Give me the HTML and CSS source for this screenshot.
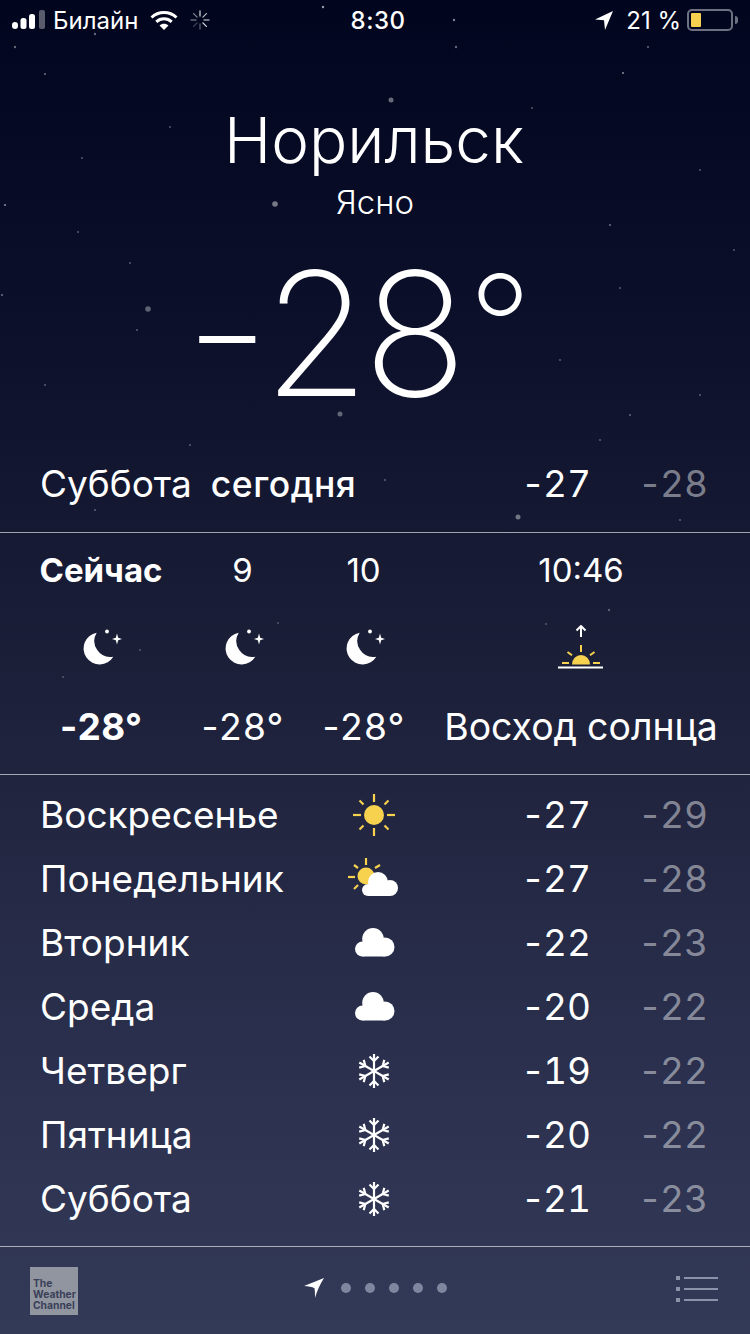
FILE: index.html
```html
<!DOCTYPE html>
<html lang="ru">
<head>
<meta charset="utf-8">
<title>Погода</title>
<link rel="stylesheet" href="styles.css">
</head>
<body>
<div class="screen">
  <svg class="stars" width="750" height="1334" viewBox="0 0 750 1334">
    <g fill="#fff">
      <circle cx="391" cy="100" r="2.500" opacity=".4"/><circle cx="275" cy="204" r="2.800" opacity=".45"/><circle cx="148" cy="309" r="2.800" opacity=".35"/><circle cx="340" cy="414" r="2.500" opacity=".35"/><circle cx="518" cy="517" r="2.500" opacity=".4"/><circle cx="323" cy="7" r="1.200" opacity=".6"/><circle cx="95" cy="34" r="1.200" opacity=".4"/><circle cx="15" cy="47" r="1.200" opacity=".4"/><circle cx="456" cy="47" r="1.200" opacity=".4"/><circle cx="454" cy="20" r="1.200" opacity=".5"/><circle cx="648" cy="47" r="1.200" opacity=".3"/><circle cx="45" cy="74" r="1.100" opacity=".4"/><circle cx="623" cy="73" r="1.100" opacity=".5"/><circle cx="532" cy="108" r="1.100" opacity=".3"/><circle cx="170" cy="127" r="1.100" opacity=".3"/><circle cx="5" cy="205" r="1.100" opacity=".5"/><circle cx="82" cy="158" r="1.100" opacity=".3"/><circle cx="700" cy="170" r="1.100" opacity=".3"/><circle cx="610" cy="225" r="1.100" opacity=".4"/><circle cx="78" cy="232" r="1.100" opacity=".3"/><circle cx="130" cy="263" r="1.100" opacity=".3"/><circle cx="2" cy="295" r="1.100" opacity=".4"/><circle cx="620" cy="288" r="1.100" opacity=".3"/><circle cx="734" cy="250" r="1.100" opacity=".3"/><circle cx="137" cy="330" r="1.100" opacity=".3"/><circle cx="560" cy="360" r="1.100" opacity=".3"/><circle cx="45" cy="385" r="1.100" opacity=".3"/><circle cx="700" cy="395" r="1.100" opacity=".3"/><circle cx="630" cy="415" r="1.100" opacity=".35"/><circle cx="600" cy="440" r="1.100" opacity=".3"/><circle cx="190" cy="445" r="1.100" opacity=".3"/><circle cx="385" cy="480" r="1.100" opacity=".3"/><circle cx="95" cy="510" r="1.100" opacity=".3"/><circle cx="680" cy="520" r="1.100" opacity=".3"/><circle cx="140" cy="650" r="1.100" opacity=".25"/><circle cx="278" cy="623" r="1.100" opacity=".25"/><circle cx="63" cy="677" r="1.100" opacity=".25"/><circle cx="546" cy="624" r="1.100" opacity=".25"/><circle cx="609" cy="610" r="1.200" opacity=".3"/>
    </g>
  </svg>

  <div class="status">
    <div class="status-left">
      <svg class="signal" width="34" height="20" viewBox="0 0 34 20"><g fill="#fff"><rect x="0" y="12" width="6" height="7" rx="3"/><rect x="8.500" y="8" width="6" height="11" rx="2.500"/><rect x="17" y="4" width="6" height="15" rx="2.500"/></g><rect x="27" y="0" width="6" height="19" rx="2" fill="#fff" opacity=".35"/></svg>
      <span class="carrier">Билайн</span>
      <svg class="wifi" width="28" height="20" viewBox="0 0 28 20"><g fill="none" stroke="#fff" stroke-width="3"><path d="M1.500 7.500C8.500 .8 19.500 .8 26.500 7.500"/><path d="M6.300 11.800C10.600 7.800 17.400 7.800 21.700 11.800"/></g><path d="M9.500 15.500C12 13 16 13 18.500 15.500L14 20Z" fill="#fff"/></svg>
      <svg class="spinner" width="20" height="20" viewBox="0 0 20 20" stroke="#fff" stroke-width="1.300" stroke-linecap="round"><path d="M10 1v5" opacity=".8"/><path d="M16.400 3.600l-3.500 3.500" opacity=".7"/><path d="M19 10h-5" opacity=".6"/><path d="M16.400 16.400l-3.500-3.500" opacity=".85"/><path d="M10 19v-5" opacity=".35"/><path d="M3.600 16.400l3.500-3.500" opacity=".25"/><path d="M1 10h5" opacity=".4"/><path d="M3.600 3.600l3.500 3.500" opacity=".5"/></svg>
    </div>
    <div class="clock">8:30</div>
    <div class="status-right">
      <svg class="loc" width="18" height="19" viewBox="0 0 18 19"><path d="M18 0 0 8.500l9 .8L10 19Z" fill="#fff"/></svg>
      <span class="percent">21 %</span>
      <div class="battery"><div class="battery-fill"></div></div>
      <div class="battery-tip"></div>
    </div>
  </div>

  <header class="hero">
    <h1 class="city">Норильск</h1>
    <div class="condition">Ясно</div>
    <div class="temp"><span class="temp-minus">–</span><span class="temp-digits">28</span><span class="temp-deg">°</span></div>
  </header>

  <section class="today">
    <div class="day-name"><span>Суббота</span><span class="today-tag">сегодня</span></div>
    <div class="hi"><span class="sign">-</span>27</div>
    <div class="lo"><span class="sign">-</span>28</div>
  </section>

  <section class="hourly">
    <div class="hour">
      <div class="hour-label strong">Сейчас</div>
      <svg class="moon" width="42" height="36" viewBox="0 0 42 36"><use href="#moon-shape"/></svg>
      <div class="hour-temp strong"><span class="sign">-</span>28°</div>
    </div>
    <div class="hour">
      <div class="hour-label">9</div>
      <svg class="moon" width="42" height="36" viewBox="0 0 42 36"><use href="#moon-shape"/></svg>
      <div class="hour-temp"><span class="sign">-</span>28°</div>
    </div>
    <div class="hour">
      <div class="hour-label">10</div>
      <svg class="moon" width="42" height="36" viewBox="0 0 42 36"><use href="#moon-shape"/></svg>
      <div class="hour-temp"><span class="sign">-</span>28°</div>
    </div>
    <div class="hour hour-wide">
      <div class="hour-label">10:46</div>
      <svg class="sunrise" width="48" height="46" viewBox="0 0 48 46">
        <g fill="none" stroke="#fff" stroke-width="2"><path d="M24 12V1"/><path d="M19.500 5.500 24 1l4.500 4.500"/></g>
        <path d="M1 42.500h45" stroke="#fff" stroke-width="2"/>
        <path d="M15 39.500a9 9.500 0 0 1 18 0Z" fill="#f7d24e"/>
        <g stroke="#f7d24e" stroke-width="2"><path d="M24 20v7"/><path d="M10.500 27l4.500 3.200"/><path d="M37.500 27 33 30.200"/><path d="M5 38h7"/><path d="M36 38h7"/></g>
      </svg>
      <div class="hour-temp">Восход солнца</div>
    </div>
  </section>

  <section class="daily">
    <div class="day"><div class="day-name">Воскресенье</div><svg class="w" width="44" height="44" viewBox="0 0 44 44"><use href="#sun-shape"/></svg><div class="hi"><span class="sign">-</span>27</div><div class="lo"><span class="sign">-</span>29</div></div>
    <div class="day"><div class="day-name">Понедельник</div><svg class="w" width="52" height="44" viewBox="0 0 52 44"><use href="#partly-shape"/></svg><div class="hi"><span class="sign">-</span>27</div><div class="lo"><span class="sign">-</span>28</div></div>
    <div class="day"><div class="day-name">Вторник</div><svg class="w" width="42" height="34" viewBox="0 0 42 34"><use href="#cloud-shape"/></svg><div class="hi"><span class="sign">-</span>22</div><div class="lo"><span class="sign">-</span>23</div></div>
    <div class="day"><div class="day-name">Среда</div><svg class="w" width="42" height="34" viewBox="0 0 42 34"><use href="#cloud-shape"/></svg><div class="hi"><span class="sign">-</span>20</div><div class="lo"><span class="sign">-</span>22</div></div>
    <div class="day"><div class="day-name">Четверг</div><svg class="w" width="36" height="38" viewBox="0 0 36 38"><use href="#snow-shape"/></svg><div class="hi"><span class="sign">-</span>19</div><div class="lo"><span class="sign">-</span>22</div></div>
    <div class="day"><div class="day-name">Пятница</div><svg class="w" width="36" height="38" viewBox="0 0 36 38"><use href="#snow-shape"/></svg><div class="hi"><span class="sign">-</span>20</div><div class="lo"><span class="sign">-</span>22</div></div>
    <div class="day"><div class="day-name">Суббота</div><svg class="w" width="36" height="38" viewBox="0 0 36 38"><use href="#snow-shape"/></svg><div class="hi"><span class="sign">-</span>21</div><div class="lo"><span class="sign">-</span>23</div></div>
    <div class="day"><div class="day-name"></div><svg class="w" width="36" height="38" viewBox="0 0 36 38"><use href="#snow-shape"/></svg><div class="hi"></div><div class="lo"></div></div>
  </section>

  <footer class="footer">
    <div class="twc">The<br>Weather<br>Channel</div>
    <div class="pager">
      <svg class="pager-loc" width="20" height="20" viewBox="0 0 20 20"><path d="M20 0 0 8c4.500 .2 8 .8 10.500 2.200C11 13 11 16 11 20 13 13 16 6 20 0Z" fill="#fff"/></svg>
      <i class="dot"></i><i class="dot"></i><i class="dot"></i><i class="dot"></i><i class="dot"></i>
    </div>
    <svg class="list" width="43" height="26" viewBox="0 0 43 26" fill="#8b93ab"><rect y="0" width="4" height="4"/><rect x="8" y="1" width="34" height="2"/><rect y="11" width="4" height="4"/><rect x="8" y="12" width="34" height="2"/><rect y="22" width="4" height="4"/><rect x="8" y="23" width="34" height="2"/></svg>
  </footer>

  <svg class="defs" width="0" height="0">
    <defs>
      <g id="moon-shape" fill="#fff">
        <path d="M16.700 3.700A16 16 0 1 0 33.300 27.700 16 16 0 0 1 16.700 3.700Z"/>
        <circle cx="27" cy="2.500" r="1.900"/>
        <path d="M37 4.500l1.200 4.300 3.800 1.200-3.800 1.200L37 15.500l-1.200-4.300-3.800-1.200 3.800-1.200Z"/>
      </g>
      <g id="sun-shape">
        <circle cx="22" cy="22" r="10" fill="#f7d24e"/>
        <g stroke="#f7d24e" stroke-width="2.200"><path d="M22 1v8"/><path d="M22 35v8"/><path d="M1 22h8"/><path d="M35 22h8"/><path d="M7.500 7.500l4 4"/><path d="M36.500 7.500l-4 4"/><path d="M7.500 36.500l4-4"/><path d="M36.500 36.500l-4-4"/></g>
      </g>
      <g id="partly-shape">
        <circle cx="18" cy="19" r="8.500" fill="#f7d24e"/>
        <g stroke="#f7d24e" stroke-width="2.200"><path d="M18 1v7"/><path d="M0 20h7"/><path d="M6 8l4 3"/><path d="M32 8l-5 3"/><path d="M6 32l4-4"/></g>
        <g fill="#fff"><circle cx="20" cy="33" r="6"/><circle cx="30" cy="25" r="10"/><circle cx="42" cy="31" r="8"/><rect x="20" y="29" width="22" height="10"/></g>
      </g>
      <g id="cloud-shape" fill="#fff">
        <circle cx="9.500" cy="23" r="7.500"/><circle cx="20" cy="12.800" r="10.800"/><circle cx="32" cy="21" r="9.500"/><rect x="9.500" y="20" width="22.500" height="10.500"/>
      </g>
      <g id="snow-arm" fill="none" stroke="#fff" stroke-width="2.200">
        <path d="M18 19V2"/><path d="M13.500 4.500 18 9l4.500-4.500"/>
      </g>
      <g id="snow-shape">
        <use href="#snow-arm"/>
        <use href="#snow-arm" transform="rotate(60 18 19)"/>
        <use href="#snow-arm" transform="rotate(120 18 19)"/>
        <use href="#snow-arm" transform="rotate(180 18 19)"/>
        <use href="#snow-arm" transform="rotate(240 18 19)"/>
        <use href="#snow-arm" transform="rotate(300 18 19)"/>
      </g>
    </defs>
  </svg>
</div>
</body>
</html>
```

FILE: styles.css
```css
* { box-sizing: border-box; margin: 0; padding: 0; }
html, body { width: 750px; height: 1334px; overflow: hidden; }
body { font-family: Inter, "Noto Sans", "Liberation Sans", sans-serif; color: #fff; }

.screen {
  position: relative;
  width: 750px;
  height: 1334px;
  overflow: hidden;
  display: flex;
  flex-direction: column;
  background: linear-gradient(180deg, #01051e 0%, #0c102a 25%, #1c1f38 50%, #272c49 72%, #333a58 100%);
}
.stars { position: absolute; left: 0; top: 0; filter: blur(.6px); }
.defs { position: absolute; }

.status {
  position: relative;
  height: 40px;
  flex: none;
  display: grid;
  grid-template-columns: 1fr auto 1fr;
  align-items: center;
  font-size: 24px;
  padding: 0 12px;
}
.status-left { display: flex; align-items: center; }
.carrier { margin-left: 7px; }
.wifi { margin-left: 12px; }
.spinner { margin-left: 12px; }
.clock { font-weight: 500; letter-spacing: .5px; margin-left: 5px; margin-right: -1px; }
.status-right { display: flex; align-items: center; justify-content: flex-end; }
.percent { margin-left: 13px; }
.battery { margin-left: 6px; width: 46px; height: 22px; border: 2px solid #6e7182; border-radius: 5px; padding: 2px; }
.battery-fill { width: 10px; height: 100%; background: #f7d24e; border-radius: 1px; }
.battery-tip { width: 3px; height: 8px; margin-left: 2px; background: #6e7182; border-radius: 0 3px 3px 0; }

.hero { position: relative; height: 421px; flex: none; display: flex; flex-direction: column; align-items: center; }
.city { font-size: 63.700px; font-weight: 300; line-height: 82px; margin-top: 59px; margin-left: -2px; }
.condition { font-size: 33px; font-weight: 300; line-height: 40px; margin-top: 1px; }
.temp { font-size: 172px; font-weight: 200; line-height: 190px; margin-top: 16px; white-space: nowrap; margin-left: -19px; }
.temp-digits { letter-spacing: -6px; }
.temp-minus { font-size: 112px; font-weight: 300; line-height: 0; vertical-align: 22px; margin-right: 8px; }
.temp-deg { font-size: 140px; line-height: 0; vertical-align: 20px; margin-left: 7px; }

.today, .day {
  position: relative;
  display: grid;
  grid-template-columns: 293px 82px 1fr 119px;
  align-items: center;
  padding: 0 42px 0 40px;
  font-size: 37px;
  font-weight: 400;
}
.today { height: 72px; padding-bottom: 24px; border-bottom: 1px solid rgba(255,255,255,.6); grid-template-columns: 1fr 119px 119px; }
.today-tag { margin-left: 19px; font-size: 35.500px; font-weight: 500; letter-spacing: .5px; }
.hi, .lo { text-align: right; font-variant-numeric: tabular-nums; padding-bottom: 2px; }
.day-name { padding-bottom: 2px; }
.hi { margin-right: -2px; }
.lo { color: rgba(255,255,255,.45); }
.sign { font-variant-numeric: normal; letter-spacing: 1.500px; }

.hourly {
  position: relative;
  height: 242px;
  flex: none;
  display: flex;
  gap: 40px;
  padding-left: 40px;
  border-bottom: 1px solid rgba(255,255,255,.6);
}
.hour { width: 81px; flex: none; display: flex; flex-direction: column; align-items: center; }
.hour:first-child { width: 122px; }
.hour-wide { width: 272px; margin-left: 1px; }
.hour-label { font-size: 33px; line-height: 36px; margin-top: 19px; white-space: nowrap; }
.hour-temp { font-size: 37px; line-height: 44px; white-space: nowrap; margin-top: auto; margin-bottom: 25px; font-variant-numeric: tabular-nums; }
.hour-temp .sign { letter-spacing: 0; }
.hour-wide .hour-temp { font-size: 37.400px; }
.strong { font-weight: 700; }
.moon { margin-top: 41px; }
.sunrise { margin-top: 37px; }

.daily { position: relative; height: 472px; flex: none; overflow: hidden; padding-top: 8px; border-bottom: 1px solid rgba(255,255,255,.6); }
.day { height: 64px; }
.w { justify-self: center; }

.footer {
  position: relative;
  flex: 1;
  display: flex;
  align-items: center;
  padding: 0 31px 0 30px;
  justify-content: space-between;
}
.twc {
  width: 48px;
  height: 48px;
  flex: none;
  background: #91959f;
  color: #3a3f5a;
  font-size: 10.300px;
  line-height: 11.300px;
  font-weight: 700;
  padding: 11px 0 0 3px;
}
.pager { display: flex; align-items: center; gap: 14px; margin-left: -4px; margin-top: -6px; }
.pager-loc { margin-right: 3px; }
.dot { width: 10px; height: 10px; border-radius: 50%; background: #7f879f; }
.list { margin-top: -4px; }
```
